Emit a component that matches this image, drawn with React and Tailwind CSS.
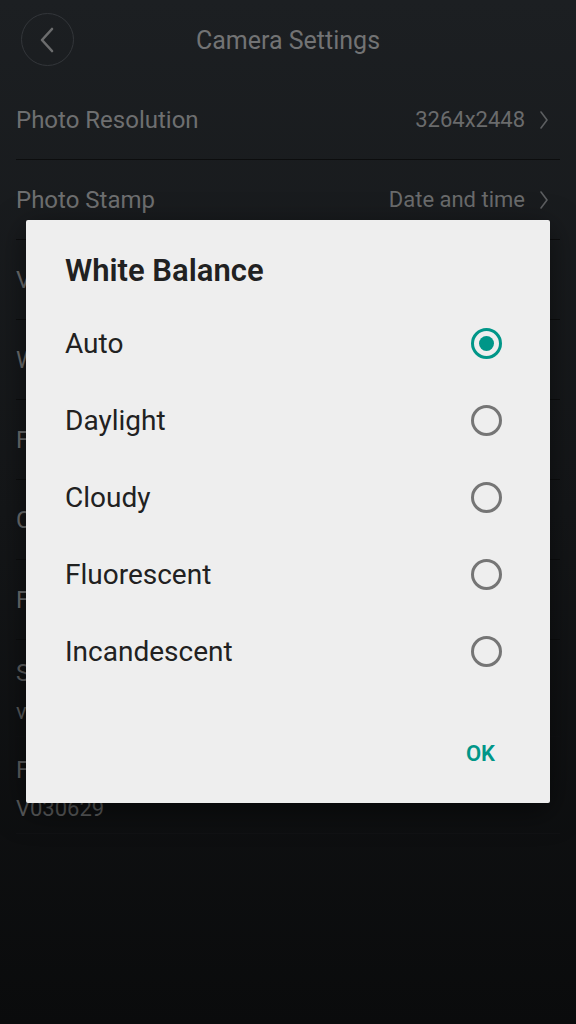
import React from 'react';

const rows = [
  { label: 'Photo Resolution', value: '3264x2448', arrow: true },
  { label: 'Photo Stamp', value: 'Date and time', arrow: true },
  { label: 'Video Resolution', value: '1920x1080', arrow: true },
  { label: 'White Balance', value: 'Auto', arrow: true },
  { label: 'Frequency', value: '50Hz', arrow: true },
  { label: 'Card Capacity', value: '', arrow: true },
  { label: 'Format SD Card', value: '', arrow: false },
];

const twoLine = [
  { label: 'SSID', value: 'vantrue_cam' },
  { label: 'Firmware Version', value: 'V030629' },
];

const options = ['Auto', 'Daylight', 'Cloudy', 'Fluorescent', 'Incandescent'];

const Chevron = () => (
  <svg width="10" height="20" viewBox="0 0 10 20" className="ml-[14px]">
    <path d="M2 2 L8 10 L2 18" fill="none" stroke="#5c5e60" strokeWidth="1.6" strokeLinecap="round" strokeLinejoin="round" />
  </svg>
);

const Radio = ({ on }) =>
  on ? (
    <div className="w-[31px] h-[31px] rounded-full border-[3px] border-[#009688] flex items-center justify-center">
      <div className="w-[15px] h-[15px] rounded-full bg-[#009688]" />
    </div>
  ) : (
    <div className="w-[31px] h-[31px] rounded-full border-[3px] border-[#757575]" />
  );

export default function App() {
  return (
    <div
      className="relative w-[576px] h-[1024px] overflow-hidden bg-gradient-to-b from-[#1c1f22] via-[#141618] to-[#0a0b0c]"
      style={{ fontFamily: 'Roboto, "Noto Sans", sans-serif' }}
    >
      {/* header */}
      <div className="h-[80px] relative flex items-center justify-center">
        <div className="absolute left-[21px] top-[13px] w-[53px] h-[53px] rounded-full border border-[#33363a] flex items-center justify-center">
          <svg width="16" height="26" viewBox="0 0 16 26" className="-ml-[2px]">
            <path d="M13 2 L3 13 L13 24" fill="none" stroke="#6c6d6e" strokeWidth="2.6" strokeLinecap="round" strokeLinejoin="round" />
          </svg>
        </div>
        <span className="text-[25px] text-[#727374] mt-[2px]">Camera Settings</span>
      </div>

      {/* list */}
      <div className="px-4">
        {rows.map((r) => (
          <div key={r.label} className="h-[80px] flex items-center justify-between border-b border-[#0c0d0e] pr-[11px]">
            <span className="text-[24px] text-[#6e6f70]">{r.label}</span>
            <div className="flex items-center">
              <span className="text-[22px] text-[#6a6b6c]">{r.value}</span>
              {r.arrow && <Chevron />}
            </div>
          </div>
        ))}
        {twoLine.map((r) => (
          <div key={r.label} className="h-[97px] pt-[8px] flex flex-col justify-center gap-[11px] border-b border-[#111214]">
            <span className="text-[24px] leading-[28px] text-[#5e5f60]">{r.label}</span>
            <span className="text-[22px] leading-[28px] text-[#5a5b5c]">{r.value}</span>
          </div>
        ))}
      </div>

      {/* dialog */}
      <div className="absolute left-[26px] top-[220px] w-[524px] h-[583px] bg-[#eeeeee] rounded-[2px] shadow-[0_8px_30px_rgba(0,0,0,0.5)] flex flex-col pt-[33px] pb-[32px]">
        <h2 className="pl-[39px] text-[31px] leading-[36px] font-semibold text-[#212121]">White Balance</h2>
        <div className="mt-[16px] flex flex-col">
          {options.map((o, i) => (
            <div key={o} className="h-[77px] flex items-center justify-between pl-[39px] pr-[48px]">
              <span className="text-[28px] text-[#212121]">{o}</span>
              <Radio on={i === 0} />
            </div>
          ))}
        </div>
        <div className="mt-auto flex justify-end pr-[55px]">
          <span className="h-[36px] flex items-center text-[22px] font-semibold text-[#009688]">OK</span>
        </div>
      </div>
    </div>
  );
}
